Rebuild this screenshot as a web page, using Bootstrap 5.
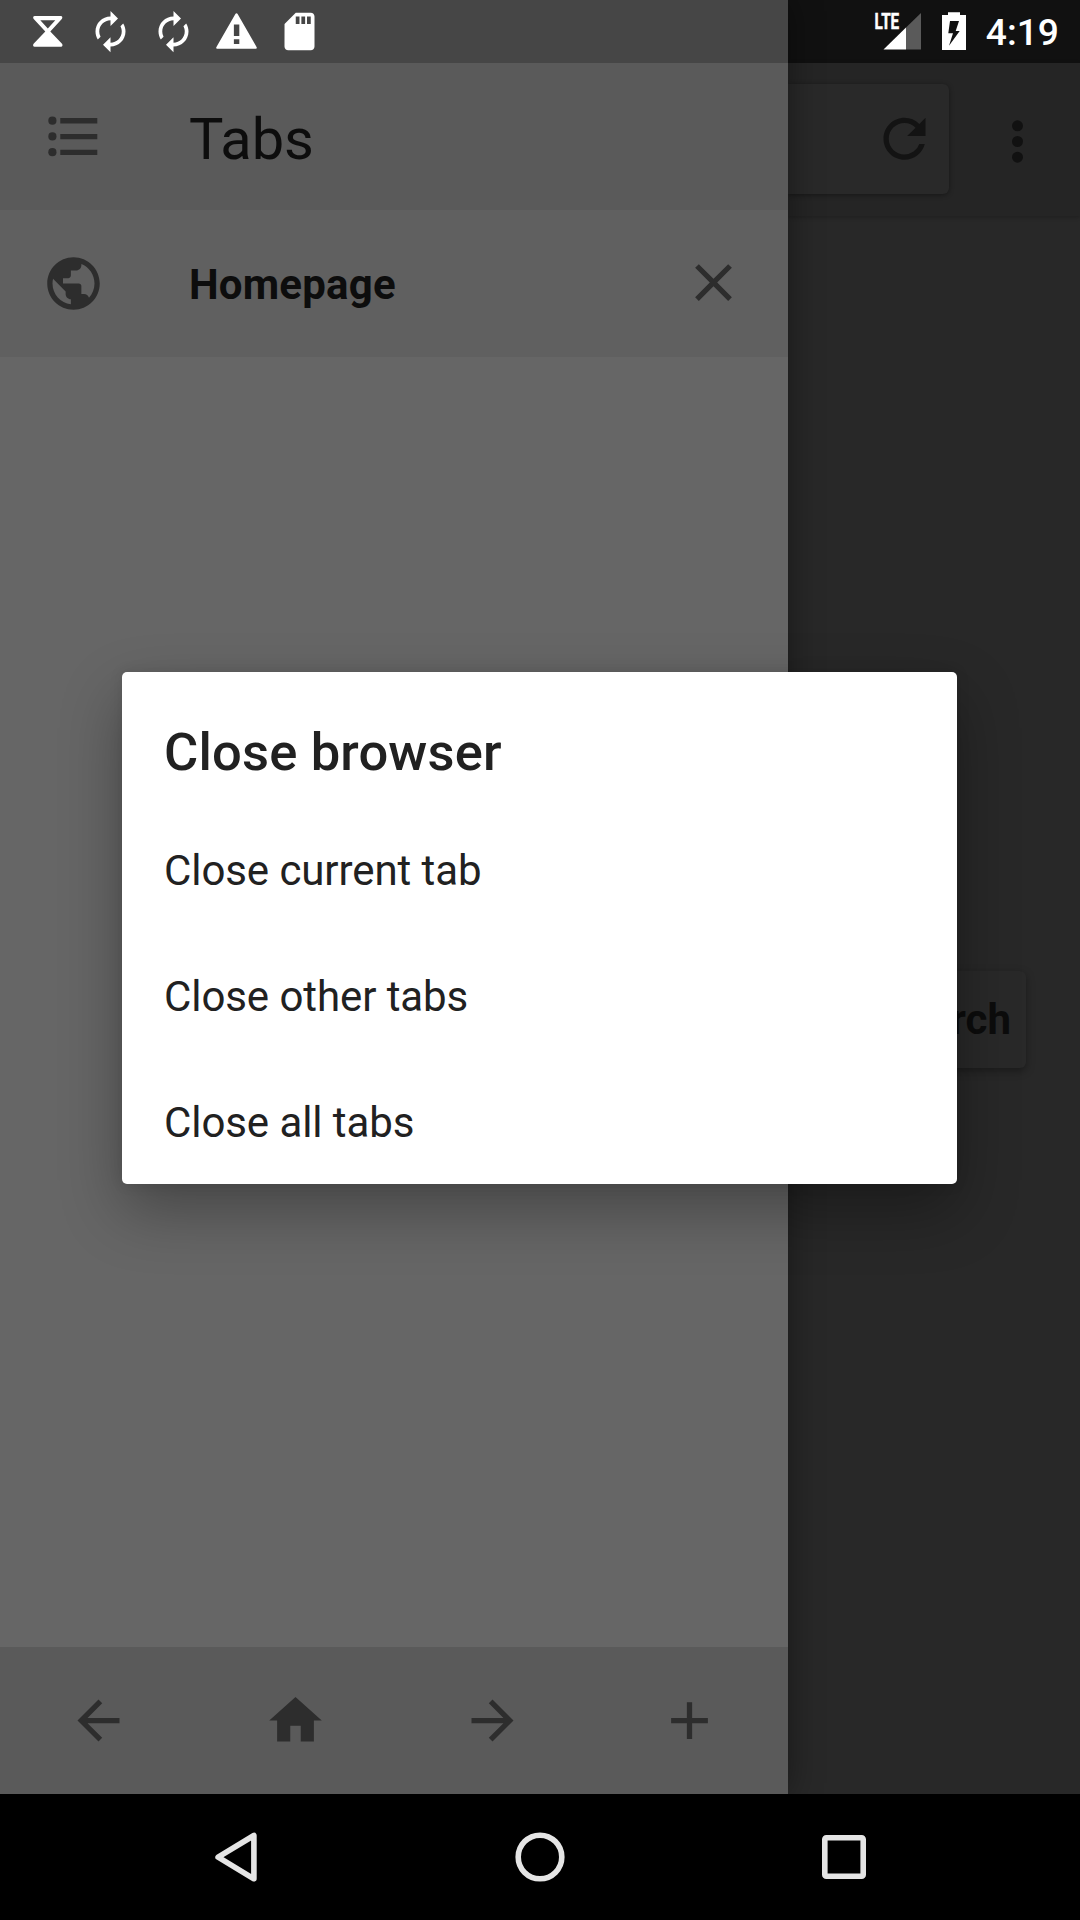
<!DOCTYPE html>
<html lang="en">
<head>
<meta charset="utf-8">
<meta name="viewport" content="width=device-width, initial-scale=1">
<title>Close browser</title>
<link href="https://cdn.jsdelivr.net/npm/bootstrap@5.3.0/dist/css/bootstrap.min.css" rel="stylesheet">
<style>
body{font-family:Roboto,"Liberation Sans",sans-serif;background:#000;color:#0d0d0d;overflow:hidden}
svg{display:block;flex:none}
.screen{width:1080px;height:1920px}
.app-area{height:1794px}
.drawer{width:788px;background:#666;box-shadow:0 0 32px rgba(0,0,0,.42);z-index:1}
.web-page{width:292px;background:#282828}
.status{height:63px;flex:none}
.status-start{background:#464646;gap:18px;padding-left:25px}
.status-end{background:#111}
.ico{width:63px;height:63px;fill:#2d2d2d}
.bar{height:147px;flex:none}
.drawer-head,.drawer-foot{background:#5a5a5a}
.drawer-head,.tab-row{padding-left:42px;gap:84px}
.tab-row{background:#606060;padding-right:43px}
.tab-close{margin-bottom:2px}
.drawer-title{font-size:57.75px;line-height:70px;padding-top:4px}
.tab-name{font-size:42px;line-height:50px;font-weight:700;letter-spacing:.2px;padding-top:2px}
.toolbar{height:153px;background:#252525;box-shadow:0 1px 4px rgba(0,0,0,.25);padding-top:21px;flex:none}
.url-box{width:161px;height:110px;background:#292929;border-radius:0 6px 6px 0;box-shadow:0 1px 5px rgba(0,0,0,.4);padding-right:13px}
.search-btn{width:238px;height:97px;margin-top:755px;padding-right:15px;background:#292929;border-radius:6px;box-shadow:0 3px 8px rgba(0,0,0,.35);font-size:42px;font-weight:700;color:#0c0c0c;line-height:50px}
.dialog-box{left:122px;top:672px;width:835px;height:512px;background:#fff;border-radius:5px;z-index:2;color:#212121;padding:47px 42px 0;box-shadow:0 26px 62px rgba(0,0,0,.32),0 0 14px rgba(0,0,0,.1)}
.dialog-head{font-size:52.5px;font-weight:500;line-height:66px;margin:0 0 23px;letter-spacing:.17px}
.choice{height:126px;font-size:42px;line-height:50px;letter-spacing:-.08px}
.nav-keys{height:126px;fill:none;stroke:#e5e5e5}
.clock{font-size:37.2px;font-weight:500;line-height:44px;padding-top:1px;margin:0 21px 0 4.3px}
</style>
<script src="https://cdn.jsdelivr.net/npm/bootstrap@5.3.0/dist/js/bootstrap.bundle.min.js"></script>
</head>
<body>
<div class="screen position-relative d-flex flex-column overflow-hidden">
  <div class="app-area d-flex overflow-hidden">
    <aside class="drawer d-flex flex-column position-relative">
      <div class="status status-start d-flex align-items-center">
        <svg width="45" height="45" viewBox="0 0 45 45" fill="#fff"><path fill-rule="evenodd" d="M9.8 7.1h26c1.6 0 2 1.800 1 2.900L25.300 22.500 37 34.800c1 1.300.5 2.900-1 2.900H9.600c-1.500 0-2-1.600-1-2.900L20.300 22.500 8.700 10c-1-1.100-.6-2.900 1.100-2.900zM15.300 11.300l7.500 8.300 7.500-8.300z"/></svg>
        <svg width="45" height="45" viewBox="0 0 24 24" fill="#fff"><path d="M12 6v3l4-4-4-4v3c-4.420 0-8 3.580-8 8 0 1.570.46 3.030 1.240 4.260L6.700 14.800A5.870 5.870 0 0 1 6 12c0-3.310 2.690-6 6-6zm6.760 1.740L17.300 9.200c.44.840.7 1.790.7 2.800 0 3.310-2.690 6-6 6v-3l-4 4 4 4v-3c4.420 0 8-3.580 8-8 0-1.570-.46-3.030-1.240-4.260z"/></svg>
        <svg width="45" height="45" viewBox="0 0 24 24" fill="#fff"><path d="M12 6v3l4-4-4-4v3c-4.420 0-8 3.580-8 8 0 1.570.46 3.030 1.240 4.260L6.700 14.800A5.870 5.870 0 0 1 6 12c0-3.310 2.690-6 6-6zm6.760 1.740L17.300 9.200c.44.840.7 1.790.7 2.800 0 3.310-2.690 6-6 6v-3l-4 4 4 4v-3c4.420 0 8-3.580 8-8 0-1.570-.46-3.030-1.240-4.260z"/></svg>
        <svg width="45" height="45" viewBox="0 0 24 24" fill="#fff"><path fill-rule="evenodd" d="M1.900 21.200h20.200c.7 0 .9-.5.6-1L12.600 2.600c-.3-.5-.9-.5-1.200 0L1.300 20.200c-.3.500-.1 1 .6 1zM10.600 8.300h2.900v6.100h-2.900zM10.600 16.100h2.900v2.600h-2.900z"/></svg>
        <svg width="45" height="45" viewBox="0 0 24 24" fill="#fff"><path d="M18 2h-8L4.020 8 4 20c0 1.100.9 2 2 2h12c1.100 0 2-.9 2-2V4c0-1.100-.9-2-2-2zm-6 6h-2V4h2v4zm3 0h-2V4h2v4zm3 0h-2V4h2v4z"/></svg>
      </div>
      <header class="bar drawer-head d-flex align-items-center">
        <svg class="ico" viewBox="0 0 63 63"><circle cx="10.400" cy="15.700" r="4.100"/><circle cx="10.400" cy="31.400" r="4.100"/><circle cx="10.400" cy="47.200" r="4.100"/><path d="M18.300 13h37v5.500h-37zM18.300 29h37v5.200h-37zM18.300 44.700h37v5.200h-37z"/></svg>
        <div class="drawer-title">Tabs</div>
      </header>
      <div class="bar tab-row d-flex align-items-center">
        <svg class="ico" viewBox="0 0 24 24"><path d="M12 2C6.480 2 2 6.480 2 12s4.480 10 10 10 10-4.480 10-10S17.520 2 12 2zm-1 17.930c-3.950-.49-7-3.850-7-7.930 0-.62.080-1.210.21-1.790L9 15v1c0 1.100.9 2 2 2v1.930zm6.900-2.540c-.26-.81-1-1.390-1.900-1.390h-1v-3c0-.55-.45-1-1-1H8v-2h2c.55 0 1-.45 1-1V7h2c1.100 0 2-.9 2-2v-.41c2.930 1.190 5 4.060 5 7.410 0 2.080-.8 3.970-2.100 5.390z"/></svg>
        <div class="tab-name flex-grow-1">Homepage</div>
        <svg class="ico tab-close" viewBox="0 0 24 24"><path d="M19 6.410L17.590 5 12 10.590 6.410 5 5 6.410 10.590 12 5 17.590 6.410 19 12 13.410 17.590 19 19 17.590 13.410 12z"/></svg>
      </div>
      <footer class="bar drawer-foot row g-0 mt-auto align-items-center">
        <div class="col d-flex justify-content-center"><svg class="ico" viewBox="0 0 24 24"><path d="M20 11H7.830l5.590-5.590L12 4l-8 8 8 8 1.410-1.410L7.830 13H20v-2z"/></svg></div>
        <div class="col d-flex justify-content-center"><svg class="ico" viewBox="0 0 24 24"><path d="M10 20v-6h4v6h5v-8h3L12 3 2 12h3v8z"/></svg></div>
        <div class="col d-flex justify-content-center"><svg class="ico" viewBox="0 0 24 24"><path d="M12 4l-1.410 1.410L16.170 11H4v2h12.170l-5.580 5.590L12 20l8-8z"/></svg></div>
        <div class="col d-flex justify-content-center"><svg class="ico" viewBox="0 0 24 24"><path d="M19 13h-6v6h-2v-6H5v-2h6V5h2v6h6v2z"/></svg></div>
      </footer>
    </aside>
    <main class="web-page d-flex flex-column">
      <div class="status status-end d-flex align-items-center justify-content-end text-white">
        <svg width="112" height="63" viewBox="870 0 112 63"><path fill="#5a5a5a" d="M922 13v36.500h-15V27.600z"/><path fill="#fff" d="M907 27.600v21.900h-22.500z"/><text x="875.600" y="29.200" font-size="22" font-weight="700" fill="#fff" stroke="#fff" stroke-width=".5" textLength="24.600" lengthAdjust="spacingAndGlyphs">LTE</text><path fill="#fff" d="M949 12.300h12V15h6v35h-24V15h6z"/><path fill="#111" d="M951 21h9l-3.300 10h4L950 45.700l4-12.400h-4.700z"/></svg>
        <div class="clock">4:19</div>
      </div>
      <div class="toolbar d-flex">
        <div class="url-box d-flex align-items-center justify-content-end">
          <svg width="63" height="63" viewBox="0 .3 24 24" fill="#131313"><path d="M17.650 6.350A7.958 7.958 0 0 0 12 4c-4.420 0-7.990 3.580-7.990 8s3.570 8 7.990 8c3.730 0 6.840-2.550 7.730-6h-2.080A5.990 5.990 0 0 1 12 18c-3.310 0-6-2.690-6-6s2.690-6 6-6c1.660 0 3.140.69 4.220 1.780L13 11h7V4l-2.350 2.350z"/></svg>
        </div>
        <svg width="131" height="110" viewBox="949 84 131 110" fill="#111"><circle cx="1017.500" cy="125.800" r="5.500"/><circle cx="1017.500" cy="141.500" r="5.500"/><circle cx="1017.500" cy="157.200" r="5.500"/></svg>
      </div>
      <div class="search-btn d-flex align-items-center justify-content-end">Search</div>
    </main>
  </div>
  <nav class="nav-keys">
    <svg width="1080" height="126" viewBox="0 1794 1080 126" stroke-width="5.600"><path stroke-linejoin="round" d="M253.900 1835.500v43.300l-35.800-21.600z"/><circle cx="540" cy="1857" r="21.800"/><rect x="824.800" y="1837.800" width="38.400" height="38.400" rx="1.500"/></svg>
  </nav>
  <section class="dialog-box position-absolute" role="dialog">
    <h1 class="dialog-head">Close browser</h1>
    <div class="choice d-flex align-items-center">Close current tab</div>
    <div class="choice d-flex align-items-center">Close other tabs</div>
    <div class="choice d-flex align-items-center">Close all tabs</div>
  </section>
</div>
</body>
</html>
